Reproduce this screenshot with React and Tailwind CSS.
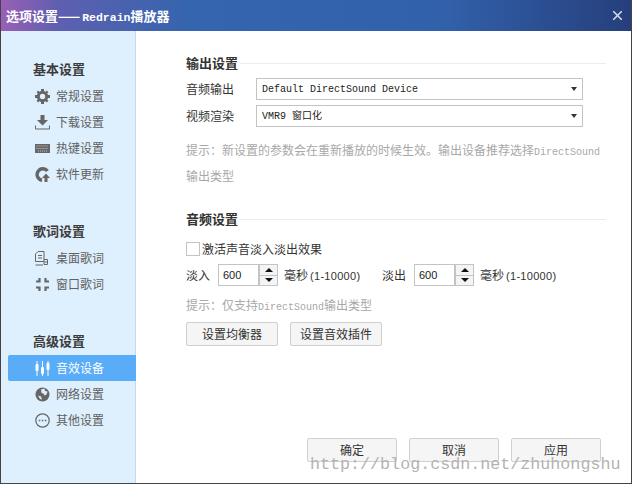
import { useState } from "react";

const CJK = "font-['Liberation_Mono','Noto_Sans_CJK_SC',monospace]";

function GearIcon() {
  return (
    <svg width="15" height="15" viewBox="0 0 15 15" fill="none">
      <circle cx="7.5" cy="7.5" r="4.2" stroke="#666" strokeWidth="3" />
      <path d="M6 0h3v2.5H6zM6 12.5h3V15H6zM0 6h2.5v3H0zM12.5 6H15v3h-2.5zM1.6 3.2l1.6-1.6 1.8 1.8-1.6 1.6zM10 11.6l1.6-1.6 1.8 1.8-1.6 1.6zM11.8 1.6l1.6 1.6-1.8 1.8-1.6-1.6zM3.4 10 5 11.6l-1.8 1.8-1.6-1.6z" fill="#666" />
    </svg>
  );
}

function DownloadIcon() {
  return (
    <svg width="15" height="15" viewBox="0 0 15 15" fill="none">
      <path d="M5.5 0h4v5H13l-5.500 5.500L2 5h3.500z" fill="#666" />
      <path d="M.5 10.500V14h14v-3.500" stroke="#666" />
    </svg>
  );
}

function KeyboardIcon() {
  return (
    <svg width="15" height="15" viewBox="0 0 15 15" fill="none">
      <rect y="3" width="15" height="9" fill="#666" />
      <path d="M1.500 5h12M1.500 7.500h12M3 10h9" stroke="#ddd" strokeWidth="0.8" strokeDasharray="1 1" />
    </svg>
  );
}

function UpdateIcon() {
  return (
    <svg width="15" height="15" viewBox="0 0 15 15" fill="none">
      <path d="M12.500 4A5.800 5.800 0 1 0 7 13.300" stroke="#666" strokeWidth="3.400" />
      <path d="M11 6.500 15 11h-2.500v4h-3v-4H7z" fill="#666" />
    </svg>
  );
}

function DesktopLyricIcon() {
  return (
    <svg width="15" height="15" viewBox="0 0 15 15" fill="none">
      <path d="M3 .5h6v10H.5V3z" stroke="#666" />
      <path d="M3 4.500h4M3 7h4" stroke="#666" />
      <path d="M9 8.500h3.500v5H9v-2.500h3.500M.5 14H8" stroke="#666" />
    </svg>
  );
}

function WindowLyricIcon() {
  return (
    <svg width="15" height="15" viewBox="0 0 15 15" fill="none">
      <path d="M4.500 1v3.500H1M10.500 1v3.500H14M4.500 14v-3.500H1M10.500 14v-3.500H14" stroke="#666" strokeWidth="2.200" />
    </svg>
  );
}

function EqualizerIcon() {
  return (
    <svg width="15" height="15" viewBox="0 0 15 15" fill="none">
      <path d="M2 0v15M7.500 0v15M13 0v15" stroke="#fff" />
      <rect x="0.500" y="3" width="3" height="7" rx="1" fill="#fff" />
      <rect x="6" y="6" width="3" height="7" rx="1" fill="#fff" />
      <rect x="11.500" y="2" width="3" height="7" rx="1" fill="#fff" />
    </svg>
  );
}

function GlobeIcon() {
  return (
    <svg width="15" height="15" viewBox="0 0 15 15" fill="none">
      <circle cx="7.500" cy="7.500" r="7" fill="#666" />
      <path d="M6 2.500 9.500 1.500 10 4l2.500.5-1 3-2 1-1-2-2-.5zM3 8.500l3 1 1 3-2-.5z" fill="#def" />
    </svg>
  );
}

function MoreIcon() {
  return (
    <svg width="15" height="15" viewBox="0 0 15 15" fill="none">
      <circle cx="7.500" cy="7.500" r="6.700" stroke="#666" strokeWidth="1.200" />
      <path d="M3.800 6.800h1.500v1.500H3.800zM6.800 6.800h1.500v1.500H6.800zM9.800 6.800h1.500v1.500H9.800z" fill="#666" />
    </svg>
  );
}

const GROUPS = [
  {
    title: "基本设置",
    items: [
      { label: "常规设置", icon: <GearIcon /> },
      { label: "下载设置", icon: <DownloadIcon /> },
      { label: "热键设置", icon: <KeyboardIcon /> },
      { label: "软件更新", icon: <UpdateIcon /> },
    ],
  },
  {
    title: "歌词设置",
    items: [
      { label: "桌面歌词", icon: <DesktopLyricIcon /> },
      { label: "窗口歌词", icon: <WindowLyricIcon /> },
    ],
  },
  {
    title: "高级设置",
    items: [
      { label: "音效设备", icon: <EqualizerIcon />, active: true },
      { label: "网络设置", icon: <GlobeIcon /> },
      { label: "其他设置", icon: <MoreIcon /> },
    ],
  },
];

function Sidebar() {
  return (
    <aside className="w-[135px] shrink-0 border-r border-[#c5d9e8] bg-[#deeffd] pt-[28px]">
      {GROUPS.map((group) => (
        <div key={group.title} className="mb-[34px] pl-[7px]">
          <h3 className="ml-[25px] h-[20px] text-[13px] leading-[20px] font-bold text-[#3c3c3c]">{group.title}</h3>
          <ul className="mt-[4px]">
            {group.items.map((item) => (
              <li
                key={item.label}
                className={`-mr-px flex h-[26px] items-center rounded-l-[2px] pl-[27px] text-[12px] ${
                  item.active ? "relative bg-[#59acf8] text-white" : "text-[#616161]"
                }`}
              >
                <span className="flex w-[20px] shrink-0 justify-start">{item.icon}</span>
                <span className="ml-[1px]">{item.label}</span>
              </li>
            ))}
          </ul>
        </div>
      ))}
    </aside>
  );
}

function SectionTitle({ children }) {
  return (
    <div className="flex h-[16px] items-center">
      <span className="text-[13px] font-bold text-[#333]">{children}</span>
      <div className="ml-[2px] h-px flex-1 bg-[#ececec]" />
    </div>
  );
}

function Select({ children }) {
  return (
    <div className={`flex h-[22px] w-[327px] items-center justify-between border border-[#c4c4c4] bg-white pr-[5px] pl-[5px] text-[10px] text-[#222] ${CJK}`}>
      <span>{children}</span>
      <span className="h-0 w-0 border-x-[3.500px] border-t-[4px] border-x-transparent border-t-[#333]" />
    </div>
  );
}

function Spin({ value }) {
  return (
    <div className="flex h-[22px] w-[60px] border border-[#c4c4c4] bg-white">
      <span className="flex-1 pl-[4px] font-['Liberation_Sans',sans-serif] text-[11px] leading-[20px] text-[#222]">{value}</span>
      <div className="flex w-[19px] flex-col border-l-[2px] border-[#c4c4c4] bg-[#f4f4f4]">
        <span className="flex flex-1 items-center justify-center border-b border-[#c4c4c4]">
          <span className="h-0 w-0 border-x-[4px] border-b-[4px] border-x-transparent border-b-[#111]" />
        </span>
        <span className="flex flex-1 items-center justify-center">
          <span className="h-0 w-0 border-x-[4px] border-t-[4px] border-x-transparent border-t-[#111]" />
        </span>
      </div>
    </div>
  );
}

function Range() {
  return (
    <span>
      毫秒
      <span className="ml-[2px] font-['Liberation_Sans',sans-serif] text-[11px] leading-[0] tracking-[0.3px]">(1-10000)</span>
    </span>
  );
}

function Button({ className, children }) {
  return (
    <button className={`h-[24px] rounded-[2px] border border-[#d0d0d0] bg-[#f5f5f5] text-[12px] text-[#333] ${className}`}>
      {children}
    </button>
  );
}

function Hint({ children }) {
  return <p className="text-[12px] leading-[26px] text-[#a8a8a8]">{children}</p>;
}

export default function App() {
  const [fade, setFade] = useState(false);

  return (
    <div className="relative flex h-[484px] w-[632px] flex-col overflow-hidden border-x border-b border-[#444] bg-white font-['Noto_Sans_CJK_SC',sans-serif]">
      <header className="flex h-[31px] shrink-0 items-center justify-between bg-[linear-gradient(90deg,#9a5fb6_0%,#5f5fb0_9%,#3465ae_30%,#3261ab_70%,#263f7c_100%)] pr-[9px] pl-[5px] text-white">
        <h1 className="text-[13px] font-bold whitespace-nowrap">
          选项设置<span className="tracking-[2px]">——</span>
          <span className="font-['Liberation_Mono',monospace] text-[11.500px] leading-[0]">Redrain</span>播放器
        </h1>
        <svg width="9" height="9" viewBox="0 0 9 9" stroke="#d8deea" strokeWidth="1.500">
          <path d="M0 0l9 9M9 0 0 9" />
        </svg>
      </header>

      <div className="flex flex-1">
        <Sidebar />

        <main className="flex flex-1 flex-col pt-[24px] pr-[25px] pl-[50px]">
          <SectionTitle>输出设置</SectionTitle>
          <div className="mt-[7px] flex items-center">
            <span className="w-[70px] text-[12px] text-[#333]">音频输出</span>
            <Select>Default DirectSound Device</Select>
          </div>
          <div className="mt-[5px] flex items-center">
            <span className="w-[70px] text-[12px] text-[#333]">视频渲染</span>
            <Select>VMR9 窗口化</Select>
          </div>
          <div className="mt-[10px]">
            <Hint>
              提示：新设置的参数会在重新播放的时候生效。输出设备推荐选择<span className="font-['Liberation_Mono',monospace] text-[10px] leading-[0]">DirectSound</span>
            </Hint>
            <Hint>输出类型</Hint>
          </div>

          <div className="mt-[22px]">
            <SectionTitle>音频设置</SectionTitle>
          </div>
          <label className="mt-[14px] flex h-[16px] items-center text-[12px] text-[#333]">
            <input
              type="checkbox"
              checked={fade}
              onChange={(e) => setFade(e.target.checked)}
              className="h-[14px] w-[14px] appearance-none border border-[#c4c4c4] bg-white"
            />
            <span className="ml-[2px]">激活声音淡入淡出效果</span>
          </label>
          <div className="mt-[7px] flex items-center text-[12px] text-[#333]">
            <span className="w-[32px]">淡入</span>
            <Spin value="600" />
            <span className="ml-[6px] w-[98px]">
              <Range />
            </span>
            <span className="w-[32px]">淡出</span>
            <Spin value="600" />
            <span className="ml-[6px]">
              <Range />
            </span>
          </div>
          <p className="mt-[9px] text-[12px] leading-[20px] text-[#a8a8a8]">
            提示：仅支持<span className="font-['Liberation_Mono',monospace] text-[10px] leading-[0]">DirectSound</span>输出类型
          </p>
          <div className="mt-[7px] flex gap-[12px]">
            <Button className="w-[92px]">设置均衡器</Button>
            <Button className="w-[92px]">设置音效插件</Button>
          </div>

          <div className="mt-auto mb-[21px] flex justify-end gap-[12px] pr-[5px]">
            <Button className="w-[90px]">确定</Button>
            <Button className="w-[90px]">取消</Button>
            <Button className="w-[90px]">应用</Button>
          </div>
        </main>
      </div>

      <span className="absolute top-[454px] left-[309px] font-['Liberation_Mono',monospace] text-[16.700px] leading-[22px] whitespace-nowrap text-[#b4b4b0]">
        http://blog.csdn.net/zhuhongshu
      </span>
    </div>
  );
}
